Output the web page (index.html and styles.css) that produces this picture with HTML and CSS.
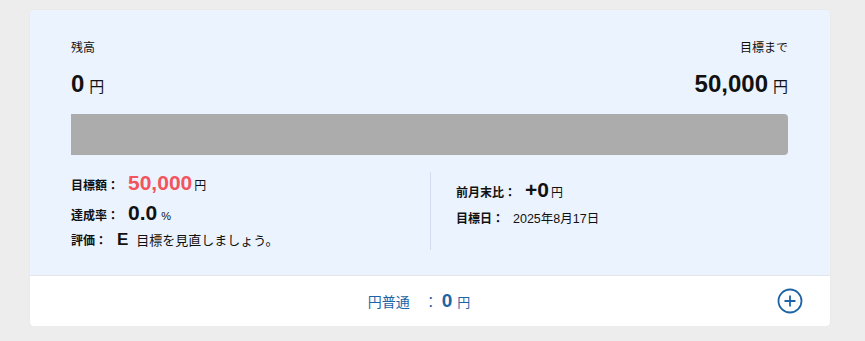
FILE: index.html
```
<!DOCTYPE html>
<html lang="ja">
<head>
    <meta charset="UTF-8">
    <meta name="viewport" content="width=device-width, initial-scale=1.0">
    <title>貯金目標</title>
    <link rel="stylesheet" href="styles.css">
</head>
<body>
    <div class="card">
        <div class="summary">
            <div class="top-row">
                <div class="balance">
                    <div class="label">残高</div>
                    <div class="amount"><span class="num">0</span><span class="yen">円</span></div>
                </div>
                <div class="balance right">
                    <div class="label">目標まで</div>
                    <div class="amount"><span class="num">50,000</span><span class="yen">円</span></div>
                </div>
            </div>

            <!-- 進捗バー -->
            <div class="progress"><div class="progress-fill" style="width: 0%"></div></div>

            <div class="stats">
                <div class="stats-col left">
                    <div class="stat row-goal">
                        <span class="stat-label">目標額：</span><span class="goal-num">50,000</span><span class="unit">円</span>
                    </div>
                    <div class="stat row-rate">
                        <span class="stat-label">達成率：</span><span class="rate-num">0.0</span><span class="unit small">%</span>
                    </div>
                    <div class="stat row-grade">
                        <span class="stat-label">評価：</span><span class="grade">E</span><span class="comment">目標を見直しましょう。</span>
                    </div>
                </div>
                <div class="stats-col right">
                    <div class="stat row-diff">
                        <span class="stat-label">前月末比：</span><span class="diff-num">+0</span><span class="unit">円</span>
                    </div>
                    <div class="stat row-date">
                        <span class="stat-label">目標日：</span><span class="date">2025年8月17日</span>
                    </div>
                </div>
            </div>
        </div>

        <div class="account">
            <div class="account-text">円普通　：<span class="account-num">0</span><span class="account-yen">円</span></div>
            <button class="add-btn" aria-label="追加">
                <svg width="26" height="26" viewBox="0 0 26 26">
                    <circle cx="13" cy="13" r="11.5" fill="none" stroke="#1d64a6" stroke-width="1.8"/>
                    <path d="M13 7.5v11M7.5 13h11" stroke="#1d64a6" stroke-width="1.8" fill="none"/>
                </svg>
            </button>
        </div>
    </div>
</body>
</html>
```

FILE: styles.css
```
body {
    margin: 0;
    background: #ededed;
    font-family: "Liberation Sans", "Noto Sans CJK JP", sans-serif;
    color: #111;
}
.card {
    width: 800px;
    margin: 10px 0 0 30px;
    background: #fff;
    border-radius: 4px;
    overflow: hidden;
    box-shadow: 0 0 2px rgba(0, 0, 0, 0.06);
}
.summary {
    background: #ebf3fe;
    padding: 28px 42px 25px 41px;
    border-bottom: 1px solid #e2e6ec;
}
.top-row {
    display: flex;
    justify-content: space-between;
}
.balance.right {
    text-align: right;
}
.label {
    font-size: 12px;
    line-height: 20px;
}
.amount {
    margin-top: 14px;
    height: 30px;
    font-size: 12px;
    line-height: 30px;
}
.amount .num {
    font-size: 24px;
    font-weight: bold;
    line-height: 1;
}
.amount .yen {
    font-size: 15px;
    line-height: 1;
    margin-left: 5px;
}
.progress {
    margin-top: 12px;
    height: 41px;
    background: #acacac;
    border-radius: 0 4px 4px 0;
}
.progress-fill {
    height: 100%;
    background: #4a90e2;
}
.stats {
    display: flex;
    margin-top: 17px;
    height: 78px;
}
.stats-col.left {
    width: 359px;
    border-right: 1px solid #d3dded;
}
.stats-col.right {
    padding: 7px 0 0 25px;
}
.stat {
    font-size: 12px;
    white-space: nowrap;
}
.stat span {
    line-height: 1;
}
.stat-label {
    font-weight: bold;
}
.row-goal { height: 24px; line-height: 24px; }
.row-rate { height: 34px; line-height: 40px; }
.row-grade { height: 20px; line-height: 22px; }
.row-diff { height: 26px; line-height: 26px; }
.row-date { height: 26px; line-height: 28px; }
.goal-num {
    margin-left: 9px;
    font-size: 21px;
    font-weight: bold;
    color: #f2555e;
}
.rate-num {
    margin-left: 9px;
    font-size: 21px;
    font-weight: bold;
}
.unit {
    margin-left: 2px;
}
.unit.small {
    font-size: 11px;
    margin-left: 4px;
}
.grade {
    margin-left: 10px;
    font-size: 17px;
    font-weight: bold;
}
.comment {
    margin-left: 8px;
    font-size: 13px;
}
.diff-num {
    margin-left: 9px;
    font-size: 21px;
    font-weight: bold;
}
.date {
    margin-left: 9px;
    font-size: 12.5px;
}
.account {
    display: flex;
    align-items: center;
    height: 50px;
    padding: 0 27px 0 31px;
    color: #1d64a6;
}
.account-text {
    flex: 1;
    text-align: center;
    font-size: 14px;
}
.account-num {
    font-size: 19px;
    font-weight: bold;
    margin-left: 4px;
}
.account-yen {
    font-size: 13px;
    margin-left: 5px;
}
.add-btn {
    width: 26px;
    height: 26px;
    padding: 0;
    border: none;
    background: none;
    cursor: pointer;
}
.add-btn svg {
    display: block;
}
```
